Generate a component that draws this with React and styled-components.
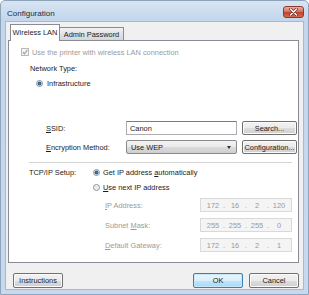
import React from 'react';
import styled, { createGlobalStyle } from 'styled-components';

const GlobalStyle = createGlobalStyle`
    html, body {
        margin: 0;
        padding: 0;
        background: #ffffff;
    }
    body {
        font-family: "Liberation Sans", Arial, sans-serif;
        font-size: 7.4px;
        color: #1b1b1b;
    }
    * {
        box-sizing: border-box;
    }
`

function Radio({ checked }) {
    return <RadioDot $checked={checked} />
}

function IpField({ parts }) {
    return (
        <Field>
            {parts.map((p, i) => (
                <React.Fragment key={i}>
                    {i > 0 && <Dot>.</Dot>}
                    <Octet>{p}</Octet>
                </React.Fragment>
            ))}
        </Field>
    )
}

function App() {
    return (
        <Window>
            <GlobalStyle />
            <TitleBar>
                <Title>Configuration</Title>
                <CloseButton>
                    <svg width="9" height="8" viewBox="0 0 9 8">
                        <path d="M1.5 1 L7.5 7 M7.5 1 L1.5 7" stroke="#6b2a22" strokeWidth="2.6" strokeLinecap="round" />
                        <path d="M1.5 1 L7.5 7 M7.5 1 L1.5 7" stroke="#ffffff" strokeWidth="1.4" strokeLinecap="round" />
                    </svg>
                </CloseButton>
            </TitleBar>
            <Body>
                <TabRow>
                    <Tab $active $w={50}>Wireless LAN</Tab>
                    <Tab $w={65}>Admin Password</Tab>
                </TabRow>
                <Panel>
                    <Row $indent={12} $top={6}>
                        <CheckBox>
                            <svg width="6" height="6" viewBox="0 0 6 6">
                                <path d="M0.8 3.2 L2.4 4.8 L5.3 1" fill="none" stroke="#9a9a9a" strokeWidth="1.1" />
                            </svg>
                        </CheckBox>
                        <Label $muted>Use the printer with wireless LAN connection</Label>
                    </Row>
                    <Row $indent={21} $top={6}>
                        <Label>Network Type:</Label>
                    </Row>
                    <Row $indent={27} $top={5}>
                        <Radio checked />
                        <Label>Infrastructure</Label>
                    </Row>

                    <FormGrid>
                        <Label><u>S</u>SID:</Label>
                        <TextInput>Canon</TextInput>
                        <Button>Search...</Button>
                        <Label><u>E</u>ncryption Method:</Label>
                        <Select>
                            <span>Use WEP</span>
                            <Arrow />
                        </Select>
                        <Button>Configuration...</Button>
                    </FormGrid>

                    <Separator />

                    <TcpGrid>
                        <Label>TCP/IP Setup:</Label>
                        <RadioOption>
                            <Radio checked />
                            <Label>Get IP address <u>a</u>utomatically</Label>
                        </RadioOption>
                        <span />
                        <RadioOption>
                            <Radio />
                            <Label><u>U</u>se next IP address</Label>
                        </RadioOption>
                    </TcpGrid>

                    <IpGrid>
                        <Label $muted><u>I</u>P Address:</Label>
                        <IpField parts={['172', '16', '2', '120']} />
                        <Label $muted>Subnet <u>M</u>ask:</Label>
                        <IpField parts={['255', '255', '255', '0']} />
                        <Label $muted><u>D</u>efault Gateway:</Label>
                        <IpField parts={['172', '16', '2', '1']} />
                    </IpGrid>
                </Panel>
                <Footer>
                    <Button $w={50}>Instructions</Button>
                    <Spacer />
                    <Button $w={50} $primary>OK</Button>
                    <Button $w={50}>Cancel</Button>
                </Footer>
            </Body>
        </Window>
    )
}

export default App

const Window = styled.div`
    width: 309px;
    height: 295px;
    display: flex;
    flex-direction: column;
    padding: 0 4px 4px 4px;
    background: linear-gradient(#d7e4f2, #c3d6ec 20px, #c6d9ee);
    border: 1px solid #8ea4bd;
    border-radius: 5px 5px 0 0;
`
const TitleBar = styled.div`
    height: 20px;
    display: flex;
    align-items: flex-start;
    padding-left: 2px;
`
const Title = styled.div`
    font-size: 8px;
    color: #1e2a38;
    margin-top: 8px;
`
const CloseButton = styled.div`
    margin-left: auto;
    margin-top: 5px;
    width: 21px;
    height: 12px;
    border: 1px solid #8a3a2e;
    border-radius: 3px;
    background: linear-gradient(#eab0a4, #d8715f 45%, #c2452f 55%, #d06a4f);
    display: flex;
    align-items: center;
    justify-content: center;
`
const Body = styled.div`
    flex: 1;
    display: flex;
    flex-direction: column;
    background: #f0f0f0;
    border: 1px solid #a6b9cf;
    padding: 3px 4px 0 2px;
`
const TabRow = styled.div`
    display: flex;
    align-items: flex-end;
    height: 16px;
    padding-left: 2px;
    margin-bottom: -1px;
    position: relative;
    z-index: 1;
`
const Tab = styled.div`
    display: flex;
    align-items: center;
    justify-content: center;
    width: ${props => props.$w}px;
    border: 1px solid #898c95;
    height: ${props => props.$active ? '17px' : '14px'};
    border-bottom: ${props => props.$active ? 'none' : '1px solid #898c95'};
    background: ${props => props.$active ? '#ffffff' : 'linear-gradient(#f2f2f2, #e2e2e2 50%, #d6d6d6)'};
    margin-left: ${props => props.$active ? '0' : '-1px'};
    padding-bottom: ${props => props.$active ? '2px' : '0'};
    color: #1b1b1b;
    white-space: nowrap;
    z-index: ${props => props.$active ? 2 : 1};
`
const Panel = styled.div`
    height: 223px;
    background: #ffffff;
    border: 1px solid #898c95;
    display: flex;
    flex-direction: column;
`
const Row = styled.div`
    display: flex;
    align-items: center;
    height: 10px;
    gap: 2px;
    padding-left: ${props => props.$indent}px;
    margin-top: ${props => props.$top}px;
`
const Label = styled.span`
    white-space: nowrap;
    color: ${props => props.$muted ? '#9a9a9a' : '#1b1b1b'};
    u {
        text-underline-offset: 1px;
    }
`
const CheckBox = styled.div`
    width: 8px;
    height: 8px;
    border: 1px solid #b9b9b9;
    background: #f4f4f4;
    display: flex;
    align-items: center;
    justify-content: center;
    margin-right: 1px;
`
const RadioDot = styled.div`
    width: 7px;
    height: 7px;
    border-radius: 50%;
    border: 1px solid #8d9196;
    background: ${props => props.$checked
        ? 'radial-gradient(circle, #3b78b0 0, #2a5d8c 1.6px, #d8e4ef 2.2px, #f2f4f6 3px)'
        : 'radial-gradient(circle, #e4e6e8 0, #f6f6f6 3px)'};
    margin-right: 2px;
    flex-shrink: 0;
`
const FormGrid = styled.div`
    display: grid;
    grid-template-columns: 75px 111px 55px;
    grid-auto-rows: 14px;
    column-gap: 5px;
    row-gap: 5px;
    align-items: center;
    padding-left: 37px;
    margin-top: 33px;
`
const TextInput = styled.div`
    height: 14px;
    border: 1px solid #abadb3;
    border-top-color: #7a7c84;
    background: #ffffff;
    display: flex;
    align-items: center;
    padding-left: 3px;
`
const Select = styled.div`
    height: 14px;
    border: 1px solid #8a8a8a;
    border-radius: 2px;
    background: linear-gradient(#f3f3f3, #e9e9e9 50%, #dbdbdb 51%, #cfcfcf);
    display: flex;
    align-items: center;
    justify-content: space-between;
    padding: 0 5px 0 4px;
`
const Arrow = styled.div`
    width: 0;
    height: 0;
    border-left: 2.5px solid transparent;
    border-right: 2.5px solid transparent;
    border-top: 3px solid #333;
`
const Button = styled.div`
    width: ${props => props.$w ? props.$w + 'px' : 'auto'};
    height: ${props => props.$w ? '15px' : '14px'};
    display: flex;
    align-items: center;
    justify-content: center;
    white-space: nowrap;
    border: 1px solid ${props => props.$primary ? '#3c7fb1' : '#707070'};
    border-radius: 2px;
    background: ${props => props.$primary
        ? 'linear-gradient(#eaf6fd, #d9f0fc 50%, #bee6fd 51%, #a7d9f5)'
        : 'linear-gradient(#f2f2f2, #ebebeb 50%, #dddddd 51%, #cfcfcf)'};
    box-shadow: inset 0 0 0 1px ${props => props.$primary ? '#c7e6f7' : '#fbfbfb'};
    color: #1b1b1b;
`
const Separator = styled.div`
    height: 2px;
    background: #d5d5d5;
    border-bottom: 1px solid #ffffff;
    margin: 8px 0 0 20px;
    width: 263px;
`
const TcpGrid = styled.div`
    display: grid;
    grid-template-columns: 64px auto;
    grid-auto-rows: 10px;
    row-gap: 5px;
    align-items: center;
    padding-left: 20px;
    margin-top: 3px;
`
const RadioOption = styled.div`
    display: flex;
    align-items: center;
    gap: 1px;
`
const IpGrid = styled.div`
    display: grid;
    grid-template-columns: 95px 92px;
    grid-auto-rows: 14px;
    row-gap: 6px;
    align-items: center;
    padding-left: 96px;
    margin-top: 6px;
`
const Field = styled.div`
    height: 14px;
    border: 1px solid #d9d9d9;
    background: #f4f4f4;
    display: flex;
    align-items: center;
    padding: 0 3px;
    color: #9a9a9a;
`
const Octet = styled.span`
    flex: 1;
    text-align: center;
`
const Dot = styled.span`
    width: 4px;
    text-align: center;
`
const Footer = styled.div`
    display: flex;
    align-items: center;
    gap: 6px;
    padding: 10px 0 0 5px;
`
const Spacer = styled.div`
    flex: 1;
`
